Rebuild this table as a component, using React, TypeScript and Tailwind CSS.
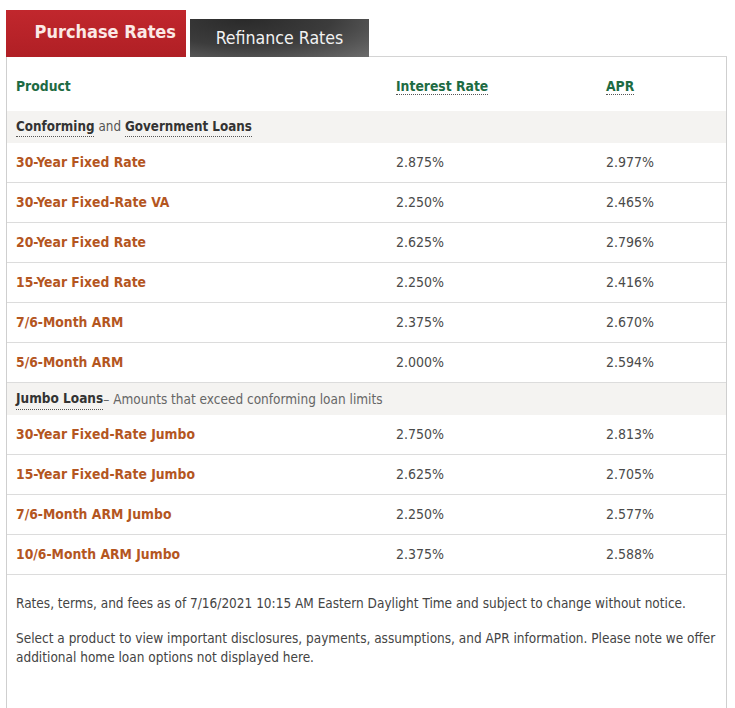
import React from 'react';

interface Rate {
    product: string;
    rate: string;
    apr: string;
}

const conforming: Rate[] = [
    { product: '30-Year Fixed Rate', rate: '2.875%', apr: '2.977%' },
    { product: '30-Year Fixed-Rate VA', rate: '2.250%', apr: '2.465%' },
    { product: '20-Year Fixed Rate', rate: '2.625%', apr: '2.796%' },
    { product: '15-Year Fixed Rate', rate: '2.250%', apr: '2.416%' },
    { product: '7/6-Month ARM', rate: '2.375%', apr: '2.670%' },
    { product: '5/6-Month ARM', rate: '2.000%', apr: '2.594%' },
];

const jumbo: Rate[] = [
    { product: '30-Year Fixed-Rate Jumbo', rate: '2.750%', apr: '2.813%' },
    { product: '15-Year Fixed-Rate Jumbo', rate: '2.625%', apr: '2.705%' },
    { product: '7/6-Month ARM Jumbo', rate: '2.250%', apr: '2.577%' },
    { product: '10/6-Month ARM Jumbo', rate: '2.375%', apr: '2.588%' },
];

const font = { fontFamily: '"DejaVu Sans Condensed", "DejaVu Sans", Verdana, sans-serif' };

const Dotted: React.FC<{ children: React.ReactNode; className?: string }> = ({ children, className }) => (
    <span className={`font-bold border-b border-dotted border-[#555] ${className ?? ''}`}>{children}</span>
);

const RateRow: React.FC<{ r: Rate }> = ({ r }) => (
    <div className="grid grid-cols-[380px_210px_1fr] items-center h-[40px] pl-[9px] border-b border-[#dcdcdc]">
        <span className="font-bold text-[13.8px] text-[#b4561f]">{r.product}</span>
        <span className="text-[14px] text-[#4a4a4a]">{r.rate}</span>
        <span className="text-[14px] text-[#4a4a4a]">{r.apr}</span>
    </div>
);

export default function App() {
    return (
        <div className="bg-white w-[735px] h-[708px] overflow-hidden pl-[6px] pt-[10px]" style={font}>
            {/* tabs */}
            <div className="flex items-end w-[721px]">
                <div className="w-[180px] h-[47px] bg-gradient-to-b from-[#c1272d] to-[#b01f25] flex items-center justify-end pr-[10px] pb-[4px]">
                    <span className="text-[18px] font-bold text-[#fbe9e6]">Purchase Rates</span>
                </div>
                <div className="ml-[4px] w-[179px] h-[38px] bg-[radial-gradient(ellipse_at_30%_0%,#2a2a2a,#3c3c3c_50%,#6c6c6c)] flex items-center justify-center">
                    <span className="text-[17.6px] text-[#f2f2f2]">Refinance Rates</span>
                </div>
                <div className="flex-1 border-b border-[#d4d4d4]" />
            </div>

            {/* table panel */}
            <div className="w-[721px] h-[700px] border-l border-r border-[#cfcfcf]">
                <div className="grid grid-cols-[380px_210px_1fr] items-center h-[54px] pt-[4px] pl-[9px] text-[13.8px] text-[#1d6b43]">
                    <span className="font-bold">Product</span>
                    <span><Dotted className="border-[#1d6b43]">Interest Rate</Dotted></span>
                    <span><Dotted className="border-[#1d6b43]">APR</Dotted></span>
                </div>

                <div className="h-[32px] flex items-center pl-[9px] bg-[#f4f3f1] text-[13.3px] text-[#555]">
                    <Dotted className="text-[#333]">Conforming</Dotted>
                    <span className="mx-[4px]">and</span>
                    <Dotted className="text-[#333]">Government Loans</Dotted>
                </div>
                {conforming.map(r => <RateRow key={r.product} r={r} />)}

                <div className="h-[32px] flex items-center pl-[9px] bg-[#f4f3f1] text-[13.5px] text-[#666]">
                    <Dotted className="text-[#333]">Jumbo Loans</Dotted>
                    <span>– Amounts that exceed conforming loan limits</span>
                </div>
                {jumbo.map(r => <RateRow key={r.product} r={r} />)}

                {/* notes */}
                <div className="pl-[9px] pr-[8px] pt-[19px] text-[13.5px] leading-[19px] text-[#444]">
                    <p>Rates, terms, and fees as of 7/16/2021 10:15 AM Eastern Daylight Time and subject to change without notice.</p>
                    <p className="mt-[16px]">Select a product to view important disclosures, payments, assumptions, and APR information. Please note we offer additional home loan options not displayed here.</p>
                </div>
            </div>
        </div>
    );
}
